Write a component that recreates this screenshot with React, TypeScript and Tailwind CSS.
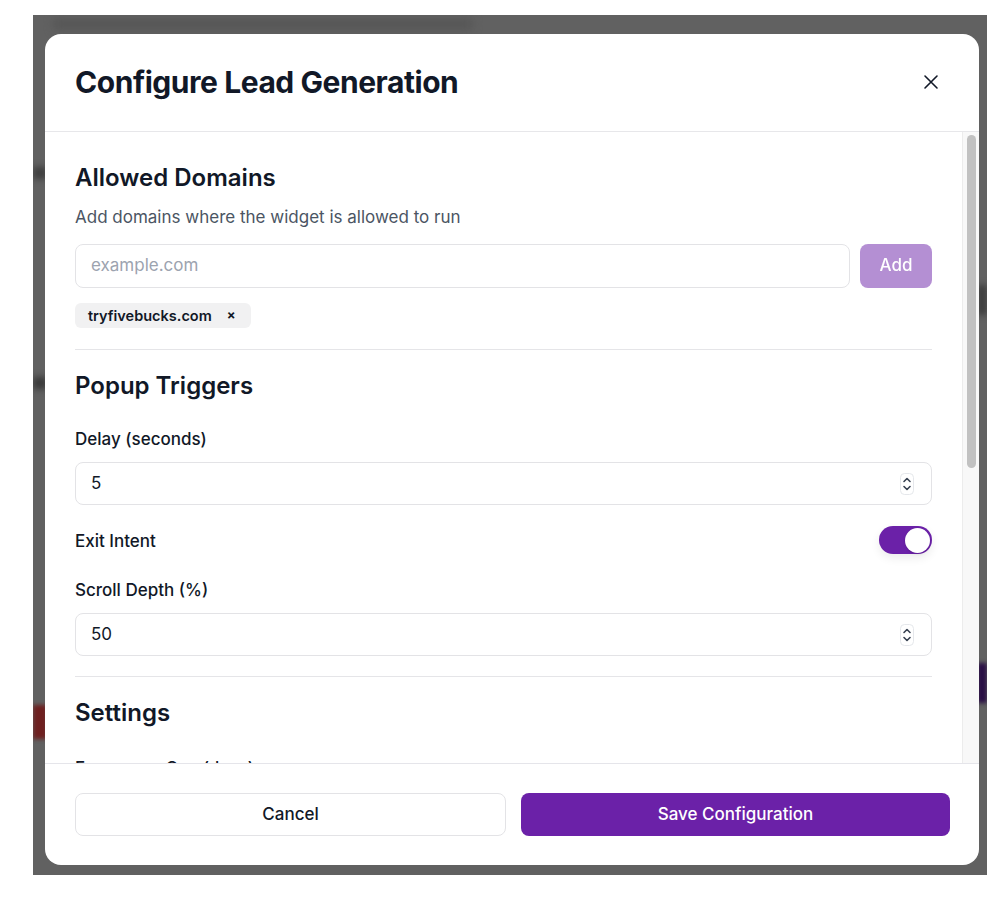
import { useState } from "react";

function Spinner() {
  return (
    <svg width="14" height="22" viewBox="0 0 14 22" className="shrink-0">
      <rect x="0.5" y="0.5" width="13" height="21" rx="4" fill="#fff" stroke="#e5e7eb" />
      <path d="M4 8.5 L7 5.5 L10 8.5" fill="none" stroke="#374151" strokeWidth="1.6" strokeLinecap="round" strokeLinejoin="round" />
      <path d="M4 13.5 L7 16.5 L10 13.5" fill="none" stroke="#374151" strokeWidth="1.6" strokeLinecap="round" strokeLinejoin="round" />
    </svg>
  );
}

function NumberField({ value }: { value: string }) {
  return (
    <div className="flex h-[43px] items-center justify-between rounded-lg border border-[#e3e3e6] bg-white pl-[15px] pr-[17px] text-[17px] text-[#111827]">
      <span>{value}</span>
      <Spinner />
    </div>
  );
}

export default function App() {
  const [exitIntent, setExitIntent] = useState(true);

  return (
    <div className="min-h-[900px] bg-white font-['Inter','Liberation_Sans',sans-serif]">
      <div className="relative ml-[33px] mt-[15px] h-[860px] w-[954px] overflow-hidden bg-[#616161]">
        {/* blurred page behind the overlay */}
        <div className="absolute left-[20px] top-[3px] h-[12px] w-[420px] rounded bg-[#575757] blur-[4px]" />
        <div className="absolute left-0 top-[152px] h-[12px] w-[14px] bg-[#3f3f3f] blur-[3px]" />
        <div className="absolute left-0 top-[362px] h-[12px] w-[14px] bg-[#3a3a3a] blur-[3px]" />
        <div className="absolute left-0 top-[690px] h-[34px] w-[14px] bg-[#6e1f1f] blur-[2px]" />
        <div className="absolute right-0 top-[270px] h-[30px] w-[10px] bg-[#3d3d3d] blur-[3px]" />
        <div className="absolute right-0 top-[648px] h-[40px] w-[10px] bg-[#2a0f45] blur-[2px]" />

        <div className="relative ml-[12px] mt-[19px] flex h-[831px] w-[934px] flex-col overflow-hidden rounded-2xl bg-white">
          {/* header */}
          <div className="flex items-center justify-between border-b border-[#e7e7ea] px-[30px] pb-[31px] pt-[30px]">
            <h1 className="text-[30px] font-bold leading-9 tracking-[-0.45px] text-[#111827]">
              Configure Lead Generation
            </h1>
            <button className="mr-[6px] flex h-6 w-6 items-center justify-center text-[#111827]">
              <svg width="16" height="16" viewBox="0 0 16 16">
                <path d="M2 2 L14 14 M14 2 L2 14" stroke="currentColor" strokeWidth="1.6" strokeLinecap="round" />
              </svg>
            </button>
          </div>

          {/* body */}
          <div className="flex min-h-0 flex-1">
            <div className="min-w-0 flex-1 overflow-hidden px-[30px] pt-[30px]">
              <h2 className="text-2xl font-semibold leading-8 text-[#111827]">Allowed Domains</h2>
              <p className="mt-[11px] text-[17px] leading-6 text-[#4b5563]">
                Add domains where the widget is allowed to run
              </p>
              <div className="mt-[15px] flex gap-[10px]">
                <div className="flex h-[44px] flex-1 items-center rounded-lg border border-[#e3e3e6] px-[15px] text-[17px] text-[#9ca3af]">
                  example.com
                </div>
                <button className="h-[44px] w-[72px] rounded-lg bg-[#6b21a8] text-[17px] font-medium text-white opacity-50">
                  Add
                </button>
              </div>
              <div className="mt-[15px] flex">
                <span className="flex h-[25px] items-center gap-[15px] rounded-md bg-[#f1f1f2] pl-[13px] pr-[15px] text-[14.5px] font-semibold text-[#111827]">
                  tryfivebucks.com
                  <span className="text-[13px] font-bold">×</span>
                </span>
              </div>

              <div className="mt-[21px] border-t border-[#e5e5e8]" />

              <h2 className="mt-[20px] text-2xl font-semibold leading-8 text-[#111827]">Popup Triggers</h2>
              <label className="mt-[25px] block text-[17px] font-medium leading-6 text-[#111827]">Delay (seconds)</label>
              <div className="mt-[11px]">
                <NumberField value="5" />
              </div>

              <div className="mt-[21px] flex h-[28px] items-center justify-between">
                <span className="pt-[3px] text-[17px] font-medium text-[#111827]">Exit Intent</span>
                <button
                  onClick={() => setExitIntent(!exitIntent)}
                  className="flex h-[28px] w-[53px] items-center rounded-full bg-[#6b21a8] px-[2px] shadow-[0_4px_10px_rgba(0,0,0,0.08)]"
                >
                  <span className="ml-auto h-[25px] w-[25px] rounded-full bg-white shadow-sm" />
                </button>
              </div>

              <label className="mt-[24px] block text-[17px] font-medium leading-6 text-[#111827]">Scroll Depth (%)</label>
              <div className="mt-[11px]">
                <NumberField value="50" />
              </div>

              <div className="mt-[20px] border-t border-[#e5e5e8]" />

              <h2 className="mt-[20px] text-2xl font-semibold leading-8 text-[#111827]">Settings</h2>
              <label className="mt-[27px] block text-[17px] font-medium leading-6 text-[#111827]">Frequency Cap (days)</label>
            </div>

            {/* scrollbar */}
            <div className="w-[17px] shrink-0 border-l border-[#ececec] bg-[#f8f8f8] pt-[3px]">
              <div className="mx-auto h-[333px] w-[9px] rounded-full bg-[#c1c1c1]" />
            </div>
          </div>

          {/* footer */}
          <div className="flex gap-[15px] border-t border-[#e5e5ea] pb-[29px] pl-[30px] pr-[29px] pt-[29px]">
            <button className="h-[43px] flex-1 rounded-lg border border-[#e3e3e6] bg-white text-[17px] font-medium text-[#111827]">
              Cancel
            </button>
            <button className="h-[43px] flex-1 rounded-lg bg-[#6b21a8] text-[17px] font-medium text-white">
              Save Configuration
            </button>
          </div>
        </div>
      </div>
    </div>
  );
}
